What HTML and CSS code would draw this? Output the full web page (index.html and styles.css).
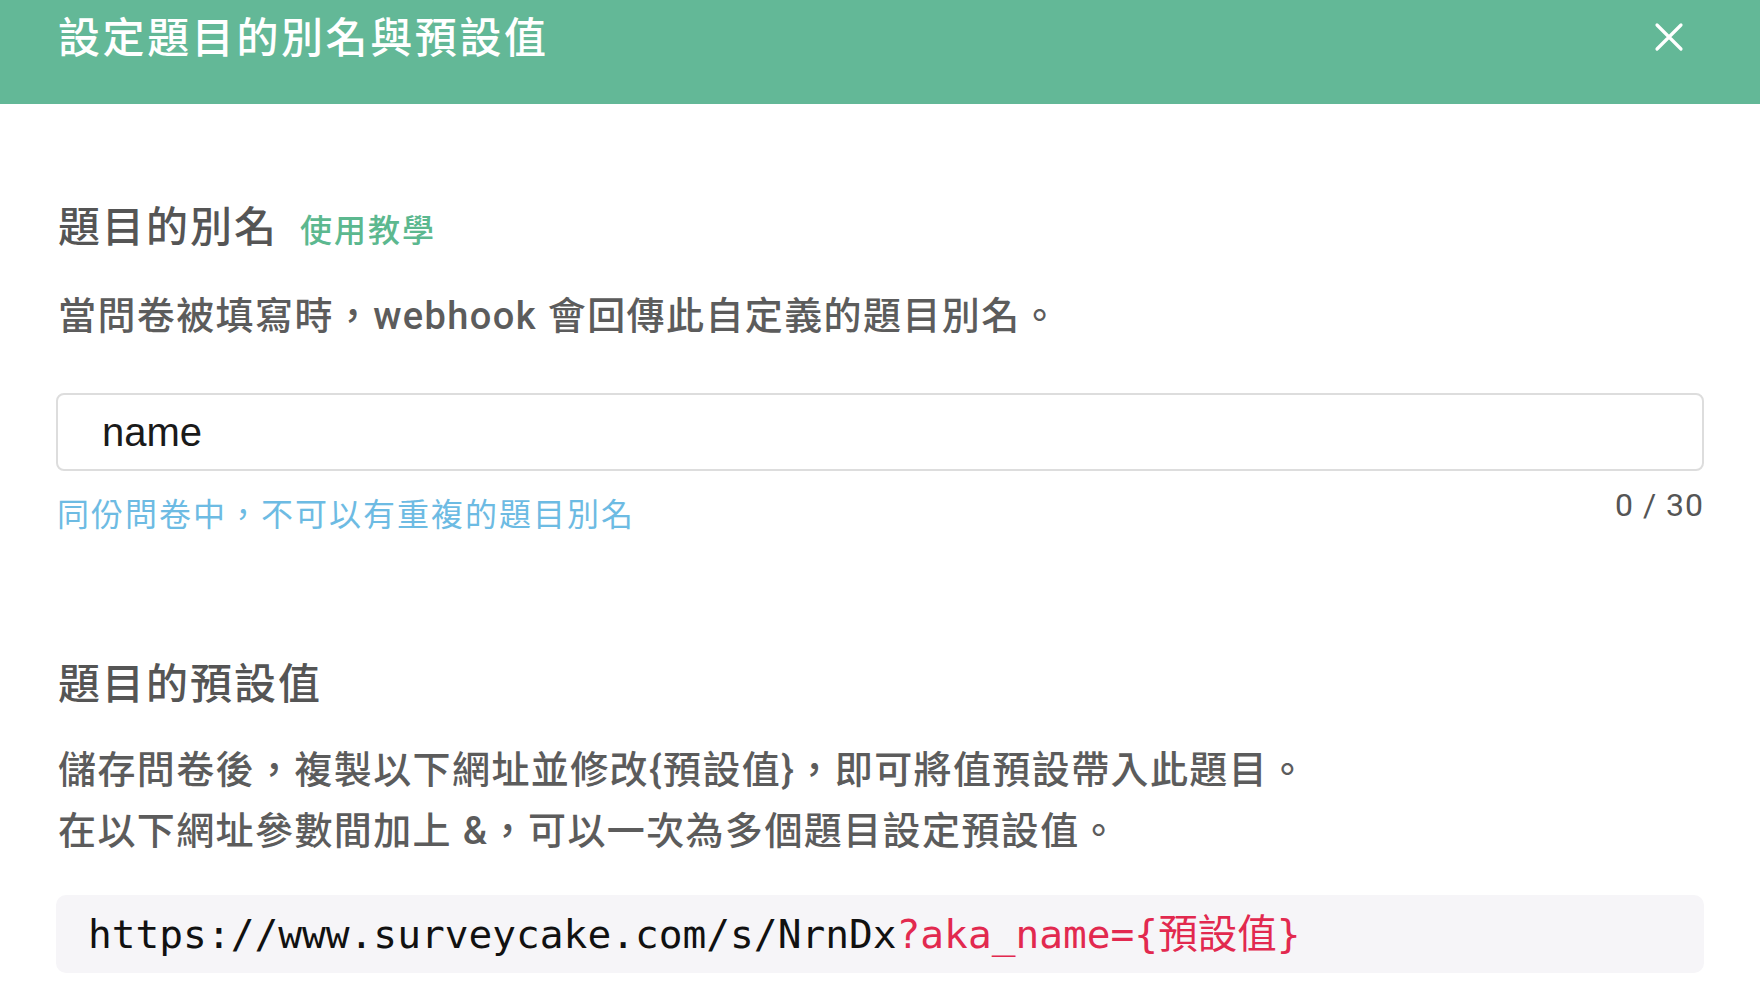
FILE: index.html
```html
<!DOCTYPE html>
<html>

<head>
    <title>設定題目的別名與預設值</title>
    <link rel="stylesheet" href="styles.css">
</head>

<body>
    <div class="modal-header">
        <h1 class="modal-title">設定題目的別名與預設值</h1>
        <button class="close-button" type="button">
            <svg width="30" height="30" viewBox="0 0 30 30">
                <path d="M3 3 L27 27 M27 3 L3 27" stroke="#ffffff" stroke-width="3.2" stroke-linecap="round" fill="none"/>
            </svg>
        </button>
    </div>

    <div class="modal-body">
        <div class="section-head">
            <h2 class="section-title">題目的別名</h2>
            <a class="help-link" href="#">使用教學</a>
        </div>
        <p class="desc">當問卷被填寫時，webhook 會回傳此自定義的題目別名。</p>

        <div class="input-box">name</div>
        <div class="hint-row">
            <span class="hint">同份問卷中，不可以有重複的題目別名</span>
            <span class="counter">0 / 30</span>
        </div>

        <div class="section-head second">
            <h2 class="section-title">題目的預設值</h2>
        </div>
        <p class="desc lines">儲存問卷後，複製以下網址並修改{預設值}，即可將值預設帶入此題目。<br>在以下網址參數間加上 &amp;，可以一次為多個題目設定預設值。</p>

        <div class="code-box">https://www.surveycake.com/s/NrnDx<span class="param">?aka_name={預設值}</span></div>
    </div>
</body>

</html>
```

FILE: styles.css
```css
body {
    margin: 0;
    background-color: #ffffff;
    font-family: "Liberation Sans", "Noto Sans CJK TC", sans-serif;
    letter-spacing: 2px;
    overflow: hidden;
}

.modal-header {
    height: 104px;
    display: flex;
    justify-content: space-between;
    align-items: flex-start;
    padding: 0 76px 0 58px;
    background-color: #63b897;
}

.modal-title {
    margin: 0;
    font-size: 42px;
    font-weight: 500;
    line-height: 78px;
    letter-spacing: 2.6px;
    color: #ffffff;
}

.close-button {
    margin-top: 22px;
    padding: 0;
    border: none;
    background: none;
    cursor: pointer;
}

.close-button svg {
    display: block;
}

.modal-body {
    padding: 0 56px;
}

.section-head {
    display: flex;
    align-items: baseline;
    margin-top: 94px;
}

.section-head.second {
    margin-top: 115px;
}

.section-title {
    margin: 0 0 0 2px;
    font-size: 42px;
    font-weight: 500;
    line-height: 60px;
    color: #555555;
}

.help-link {
    margin-left: 22px;
    font-size: 32px;
    font-weight: 500;
    color: #5cb88f;
    text-decoration: none;
}

.desc {
    margin: 30px 0 0 2px;
    font-family: Roboto, "Noto Sans CJK TC", sans-serif;
    font-size: 38px;
    font-weight: 500;
    line-height: 56px;
    letter-spacing: 1.4px;
    color: #5c5c5c;
}

.desc.lines {
    margin-top: 25px;
    line-height: 61px;
}

.input-box {
    margin-top: 49px;
    height: 74px;
    padding: 0 44px;
    border: 2px solid #dddddd;
    border-radius: 8px;
    font-size: 40px;
    line-height: 74px;
    letter-spacing: 0;
    color: #1a1a1a;
}

.hint-row {
    display: flex;
    justify-content: space-between;
    align-items: flex-start;
    margin-top: 19px;
}

.hint {
    margin-left: 1px;
    font-size: 32px;
    line-height: 50px;
    color: #6dbbe3;
}

.counter {
    font-family: Roboto, sans-serif;
    font-size: 32px;
    line-height: 30px;
    letter-spacing: 1px;
    color: #555555;
}

.code-box {
    margin-top: 33px;
    height: 78px;
    padding: 0 32px;
    border-radius: 10px;
    background-color: #f6f5f8;
    font-family: "DejaVu Sans Mono", "Noto Sans CJK TC", monospace;
    font-size: 39.5px;
    line-height: 78px;
    letter-spacing: 0;
    color: #111111;
    white-space: nowrap;
}

.param {
    color: #e2294f;
}
```
